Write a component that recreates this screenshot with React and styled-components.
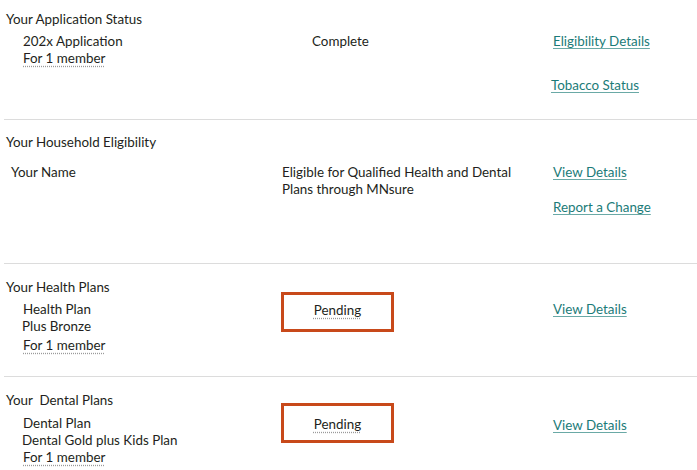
import React from "react";
import styled, { createGlobalStyle } from "styled-components";

const GlobalStyle = createGlobalStyle`
  body {
    margin: 0;
    background: #fff;
    font-family: Lato, "Open Sans", sans-serif;
    font-size: 13.4px;
    color: #231f20;
  }
`;

const Page = styled.div`
  padding-left: 4px;
  width: 693px;
`;

const Section = styled.section`
  padding: ${(p) => p.$top}px 0 0 2px;
  height: ${(p) => p.$height}px;
  box-sizing: border-box;
  border-bottom: ${(p) => (p.$last ? "none" : "1px solid #dcdcdc")};
`;

const Title = styled.h2`
  margin: 0;
  font-size: 13.4px;
  font-weight: 400;
  line-height: 17px;
`;

const Row = styled.div`
  display: grid;
  grid-template-columns: 276px 271px 1fr;
  align-items: start;
  margin-top: ${(p) => p.$gap}px;
  line-height: 17px;
`;

const Cell = styled.div`
  padding-left: ${(p) => p.$indent || 0}px;
  display: flex;
  flex-direction: column;
  align-items: flex-start;
`;

const Line = styled.span`
  margin-left: ${(p) => p.$shift || 0}px;
`;

const Member = styled.span`
  margin-top: ${(p) => p.$gap || 0}px;
  text-decoration: underline dotted #9a9a9a;
  text-underline-offset: 3px;
`;

const StatusBox = styled.div`
  width: 113px;
  height: 40px;
  box-sizing: border-box;
  margin: ${(p) => p.$lift}px 0 0 -1px;
  padding-top: ${(p) => p.$pad}px;
  border: 3px solid #c8491a;
  text-align: center;
`;

const Pending = styled.span`
  text-decoration: underline dotted #9a9a9a;
  text-underline-offset: 3px;
`;

const Links = styled.div`
  display: flex;
  flex-direction: column;
  align-items: flex-start;
  gap: ${(p) => p.$gap || 0}px;
  padding-top: ${(p) => p.$top || 0}px;
`;

const Link = styled.a`
  color: #1b7b78;
  text-decoration: underline;
  text-decoration-color: #6aa9a6;
  text-underline-offset: 2px;
  cursor: pointer;
  margin-left: ${(p) => p.$shift || 0}px;
`;

export default function App() {
  return (
    <Page>
      <GlobalStyle />
      <Section $top={11} $height={120}>
        <Title>Your Application Status</Title>
        <Row $gap={5}>
          <Cell $indent={17}>
            <Line>202x Application</Line>
            <Member>For 1 member</Member>
          </Cell>
          <Cell $indent={30}>Complete</Cell>
          <Links $gap={27}>
            <Link>Eligibility Details</Link>
            <Link $shift={-2}>Tobacco Status</Link>
          </Links>
        </Row>
      </Section>

      <Section $top={14} $height={144}>
        <Title>Your Household Eligibility</Title>
        <Row $gap={13}>
          <Cell $indent={5}>Your Name</Cell>
          <Cell>
            Eligible for Qualified Health and Dental
            <br />
            Plans through MNsure
          </Cell>
          <Links $gap={18}>
            <Link>View Details</Link>
            <Link>Report a Change</Link>
          </Links>
        </Row>
      </Section>

      <Section $top={15} $height={113}>
        <Title>Your Health Plans</Title>
        <Row $gap={5}>
          <Cell $indent={17}>
            <Line>Health Plan</Line>
            <Line $shift={-1}>Plus Bronze</Line>
            <Member $gap={2}>For 1 member</Member>
          </Cell>
          <Cell>
            <StatusBox $lift={-9} $pad={7}>
              <Pending>Pending</Pending>
            </StatusBox>
          </Cell>
          <Links>
            <Link>View Details</Link>
          </Links>
        </Row>
      </Section>

      <Section $top={15} $height={94} $last>
        <Title>Your&nbsp; Dental Plans</Title>
        <Row $gap={6}>
          <Cell $indent={17}>
            <Line>Dental Plan</Line>
            <Line $shift={-1}>Dental Gold plus Kids Plan</Line>
            <Member>For 1 member</Member>
          </Cell>
          <Cell>
            <StatusBox $lift={-12} $pad={10}>
              <Pending>Pending</Pending>
            </StatusBox>
          </Cell>
          <Links $top={2}>
            <Link>View Details</Link>
          </Links>
        </Row>
      </Section>
    </Page>
  );
}
